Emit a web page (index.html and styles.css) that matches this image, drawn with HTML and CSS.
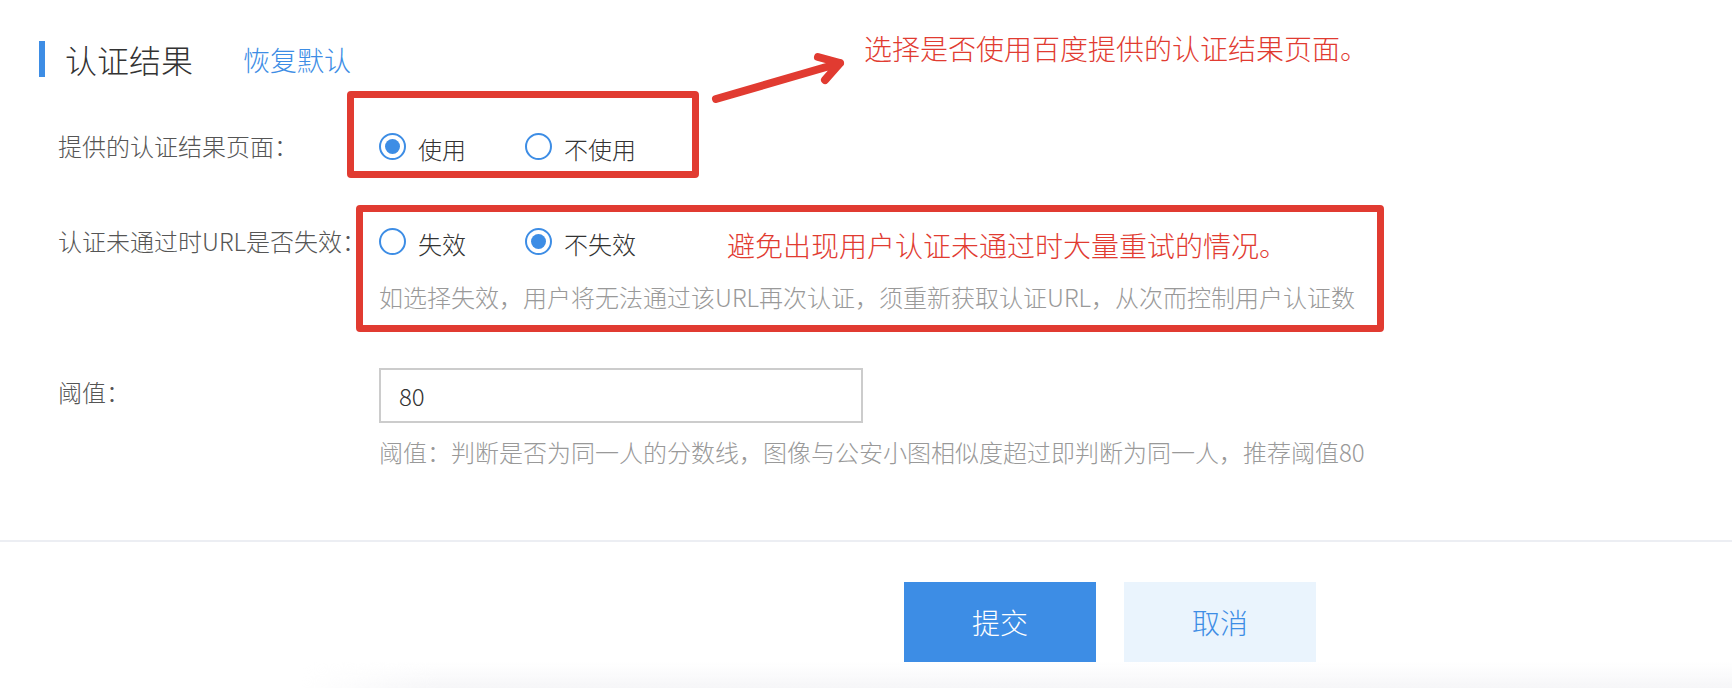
FILE: index.html
```html
<!DOCTYPE html>
<html>
<head>
    <title>认证结果</title>
    <link rel="stylesheet" href="styles.css">
</head>
<body>
    <div class="page">
        <div class="section-head">
            <span class="bar"></span>
            <h2>认证结果</h2>
            <a class="reset" href="#">恢复默认</a>
        </div>

        <form class="form">
            <div class="row">
                <label class="label">提供的认证结果页面：</label>
                <div class="field">
                    <div class="radios">
                        <label class="radio"><input type="radio" name="page" checked><span>使用</span></label>
                        <label class="radio"><input type="radio" name="page"><span>不使用</span></label>
                    </div>
                </div>
            </div>

            <div class="row">
                <label class="label">认证未通过时URL是否失效：</label>
                <div class="field">
                    <div class="radios">
                        <label class="radio"><input type="radio" name="expire"><span>失效</span></label>
                        <label class="radio"><input type="radio" name="expire" checked><span>不失效</span></label>
                    </div>
                    <p class="hint">如选择失效，用户将无法通过该URL再次认证，须重新获取认证URL，从次而控制用户认证数</p>
                </div>
            </div>

            <div class="row row-input">
                <label class="label" for="threshold">阈值：</label>
                <div class="field">
                    <input type="text" id="threshold" class="text-input" value="80">
                    <p class="hint hint-input">阈值：判断是否为同一人的分数线，图像与公安小图相似度超过即判断为同一人，推荐阈值80</p>
                </div>
            </div>
        </form>

        <div class="footer">
            <button type="button" class="btn btn-primary">提交</button>
            <button type="button" class="btn btn-light">取消</button>
        </div>
        <div class="footer-shadow"></div>

        <!-- annotations drawn over the form -->
        <div class="mark mark-page"></div>
        <div class="mark mark-expire"></div>
        <svg class="arrow" width="160" height="80" viewBox="0 0 160 80">
            <path d="M16 59 L140 23 M118 17 L140 23 L125 40" fill="none" stroke="#e13b31" stroke-width="8" stroke-linecap="round" stroke-linejoin="round"/>
        </svg>
        <p class="note note-page">选择是否使用百度提供的认证结果页面。</p>
        <p class="note note-expire">避免出现用户认证未通过时大量重试的情况。</p>
    </div>
</body>
</html>
```

FILE: styles.css
```css
body {
    margin: 0;
    padding: 0;
    font-family: "Noto Sans CJK SC", "Noto Sans", sans-serif;
    font-weight: 300;
    background-color: #fff;
    overflow: hidden;
}

.page {
    position: relative;
    width: 1732px;
    height: 688px;
}

.section-head {
    display: flex;
    align-items: center;
    padding: 41px 0 0 39px;
    height: 36px;
}

.bar {
    width: 6px;
    height: 36px;
    background-color: #3d8de5;
}

.section-head h2 {
    margin: 0 0 0 20px;
    font-size: 32px;
    font-weight: 300;
    color: #333;
}

.reset {
    margin-left: 50px;
    font-size: 27px;
    color: #3d8de5;
    text-decoration: none;
}

.form {
    margin-top: 49px;
    padding-left: 58px;
}

.row {
    display: grid;
    grid-template-columns: 321px 1fr;
    margin-bottom: 55px;
}

.label {
    font-size: 24px;
    line-height: 40px;
    color: #555;
    white-space: nowrap;
}

.radios {
    display: flex;
    height: 40px;
    align-items: center;
}

.radio {
    display: flex;
    align-items: center;
    min-width: 146px;
    font-size: 24px;
    color: #333;
}

.radio span {
    padding-top: 5px;
}

.radio input {
    appearance: none;
    -webkit-appearance: none;
    box-sizing: border-box;
    width: 27px;
    height: 27px;
    margin: 0 12px 0 0;
    border: 2px solid #3d8de5;
    border-radius: 50%;
    display: grid;
    place-content: center;
}

.radio input:checked::before {
    content: "";
    width: 15px;
    height: 15px;
    border-radius: 50%;
    background-color: #3d8de5;
}

.hint {
    margin: 16px 0 0;
    font-size: 24px;
    line-height: 40px;
    color: #999;
    white-space: nowrap;
}

.row-input {
    margin-top: -4px;
    margin-bottom: 0;
}

.row-input .label {
    padding-top: 4px;
}

.text-input {
    box-sizing: border-box;
    display: block;
    width: 484px;
    height: 55px;
    padding: 0 18px;
    border: 2px solid #ccc;
    font-family: inherit;
    font-weight: 300;
    font-size: 24px;
    color: #333;
    outline: none;
}

.hint-input {
    margin-top: 9px;
}

.footer {
    display: flex;
    justify-content: center;
    gap: 28px;
    margin-top: 68px;
    padding: 40px 0 0 488px;
    border-top: 2px solid #eceef3;
}

.btn {
    width: 192px;
    height: 80px;
    border: none;
    border-radius: 0;
    font-family: inherit;
    font-weight: 300;
    font-size: 28px;
    cursor: pointer;
}

.btn-primary {
    background-color: #3d8de5;
    color: #fff;
}

.btn-light {
    background-color: #eaf4fd;
    color: #3d8de5;
}

.footer-shadow {
    height: 26px;
    margin-left: 300px;
    background: linear-gradient(to bottom, rgba(246, 246, 248, 0), #f6f6f8);
    -webkit-mask-image: linear-gradient(to right, transparent, #000 140px);
    mask-image: linear-gradient(to right, transparent, #000 140px);
}

/* red annotation marks */
.mark {
    position: absolute;
    box-sizing: border-box;
    border: 7px solid #e13b31;
    border-radius: 4px;
}

.mark-page {
    left: 347px;
    top: 91px;
    width: 352px;
    height: 87px;
}

.mark-expire {
    left: 356px;
    top: 205px;
    width: 1028px;
    height: 127px;
}

.arrow {
    position: absolute;
    left: 700px;
    top: 40px;
}

.note {
    position: absolute;
    margin: 0;
    font-size: 28px;
    line-height: 40px;
    color: #e13b31;
    white-space: nowrap;
}

.note-page {
    left: 864px;
    top: 28px;
}

.note-expire {
    left: 727px;
    top: 225px;
}
```
